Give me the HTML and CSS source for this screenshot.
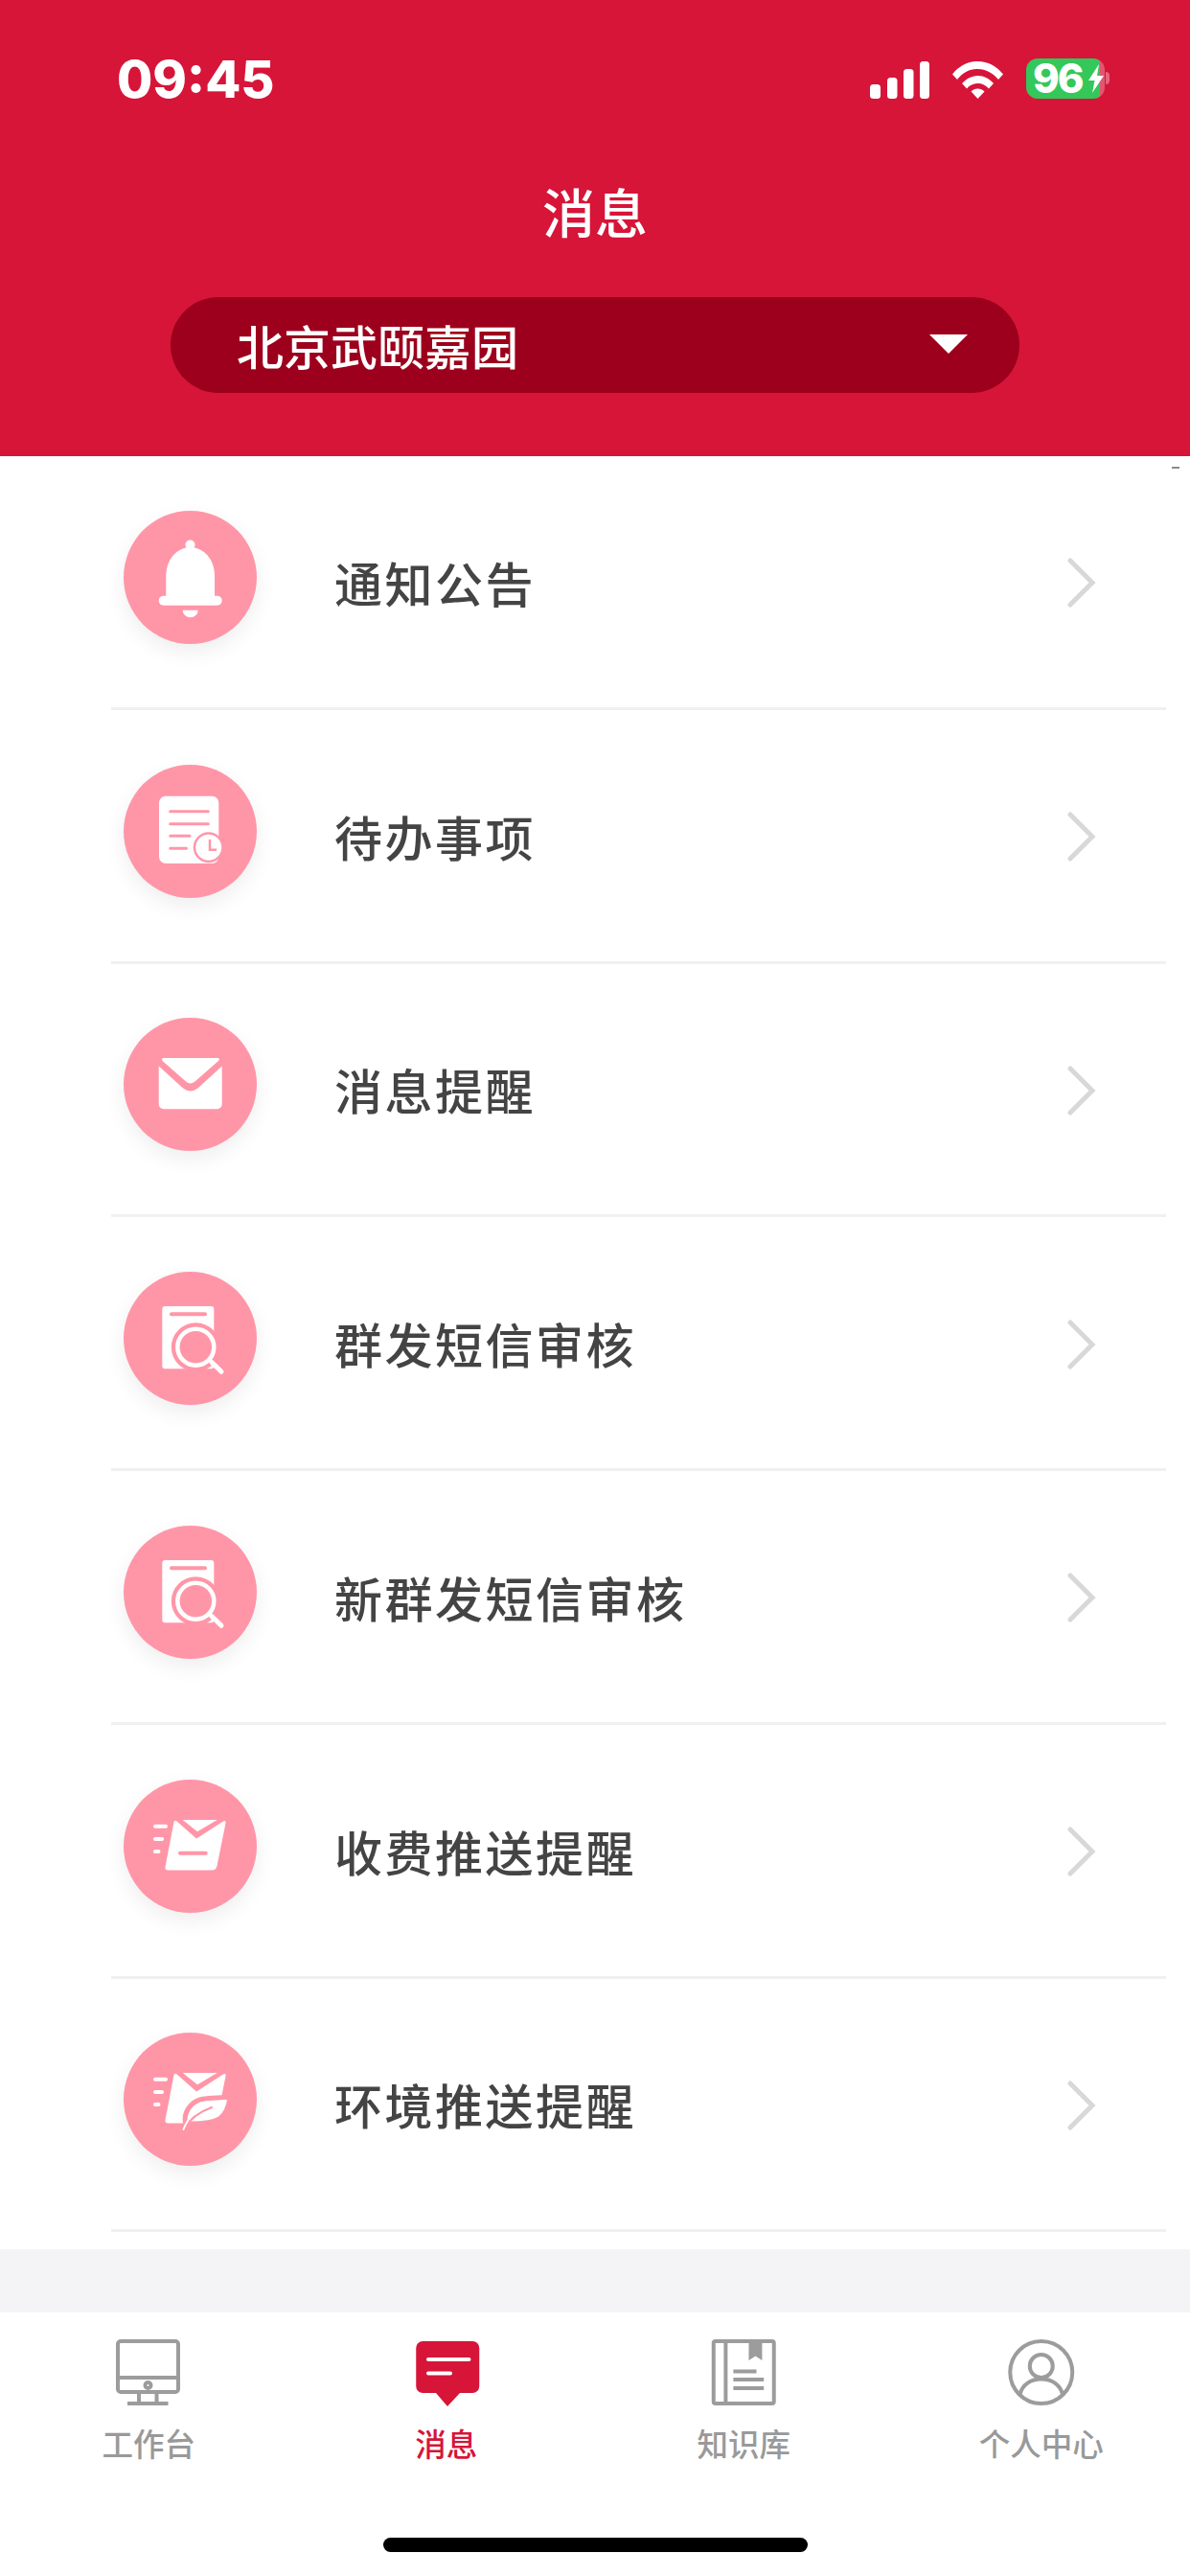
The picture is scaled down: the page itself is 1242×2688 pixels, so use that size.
FILE: index.html
```html
<!DOCTYPE html>
<html lang="zh-CN">
<head>
<meta charset="utf-8">
<title>消息</title>
<link rel="stylesheet" href="styles.css">
</head>
<body>
<header class="header">
  <div class="status">
    <span class="time">09:45</span>
    <div class="status-icons">
      <svg class="signal" viewBox="0 0 62 39"><rect x="0" y="24" width="11" height="15" rx="3.5"/><rect x="18" y="17" width="10.500" height="22" rx="3.500"/><rect x="35" y="8" width="10.500" height="31" rx="3.500"/><rect x="52" y="0" width="10" height="39" rx="3.500"/></svg>
      <svg class="wifi" viewBox="0 0 53 39"><path d="M0 13.500C7 5 16 0 26.500 0S46 5 53 13.500L48 19C42 12 35 8 26.500 8S11 12 5 19Z"/><path d="M10 23C14.500 18 20 15 26.500 15S38.500 18 43 23L38 28.500C35 25 31 23 26.500 23S18 25 15 28.500Z"/><path d="M19.500 31.500C21.500 29.500 24 28.500 26.500 28.500S31.500 29.500 33.500 31.500L26.500 39Z"/></svg>
      <div class="battery"><span class="battery-num">96</span><svg class="bolt" viewBox="0 0 16 30"><path d="M11 0 0 17H6.500L4 30 16 12H9Z"/></svg></div>
    </div>
  </div>
  <h1 class="title">消息</h1>
  <div class="picker">
    <span class="picker-text">北京武颐嘉园</span>
    <span class="picker-caret"></span>
  </div>
</header>

<main class="list">
  <span class="speck"></span>
  <div class="row">
    <div class="badge"><svg class="glyph" viewBox="0 0 139 139">
      <circle class="w" cx="69.500" cy="35.500" r="5"/>
      <path class="w" d="M44.300 90V67A25.300 29 0 0 1 95 67V90Z"/>
      <rect class="w" x="36.700" y="88.700" width="66" height="10" rx="5"/>
      <path class="w" d="M61.700 103.700H77.700A8 7.600 0 0 1 61.700 103.700Z"/>
    </svg></div>
    <span class="label">通知公告</span>
    <svg class="chev" viewBox="0 0 30 52"><path d="M3 3 26 26 3 49"/></svg>
  </div>
  <div class="row">
    <div class="badge"><svg class="glyph" viewBox="0 0 139 139">
      <rect class="w" x="37" y="32.700" width="62.300" height="70.300" rx="7"/>
      <path class="p-line" d="M48.700 48.700H88.300M48.700 61.700H88.300M48.700 74.300H69M48.700 87.300H65.500"/>
      <circle class="p" cx="88.700" cy="86.300" r="16"/>
      <circle class="w" cx="88.700" cy="86.300" r="13.500"/>
      <path class="p-hand" d="M90 78V88.700H97"/>
    </svg></div>
    <span class="label">待办事项</span>
    <svg class="chev" viewBox="0 0 30 52"><path d="M3 3 26 26 3 49"/></svg>
  </div>
  <div class="row">
    <div class="badge"><svg class="glyph" viewBox="0 0 139 139">
      <path class="w" d="M42 42H98Q101 42 99 45L74.500 66.500Q69.500 70.500 65 66.500L40.500 45Q39 42 42 42Z"/>
      <path class="w" d="M36.700 50.500 62 73.500Q69.700 79.500 77.500 73.500L102.700 50.500V90.300A5 5 0 0 1 97.700 95.300H41.700A5 5 0 0 1 36.700 90.300Z"/>
    </svg></div>
    <span class="label">消息提醒</span>
    <svg class="chev" viewBox="0 0 30 52"><path d="M3 3 26 26 3 49"/></svg>
  </div>
  <div class="row">
    <div class="badge"><svg class="glyph" viewBox="0 0 139 139">
      <rect class="w" x="40.300" y="36" width="54" height="65.300" rx="3"/>
      <path class="p-bar" d="M50 44.300H85"/>
      <circle class="p" cx="75.300" cy="78.700" r="25.500"/>
      <circle class="ring" cx="75.300" cy="78.700" r="19"/>
      <path class="handle" d="M91.700 94.300 102 104.300"/>
    </svg></div>
    <span class="label">群发短信审核</span>
    <svg class="chev" viewBox="0 0 30 52"><path d="M3 3 26 26 3 49"/></svg>
  </div>
  <div class="row">
    <div class="badge"><svg class="glyph" viewBox="0 0 139 139">
      <rect class="w" x="40.300" y="36" width="54" height="65.300" rx="3"/>
      <path class="p-bar" d="M50 44.300H85"/>
      <circle class="p" cx="75.300" cy="78.700" r="25.500"/>
      <circle class="ring" cx="75.300" cy="78.700" r="19"/>
      <path class="handle" d="M91.700 94.300 102 104.300"/>
    </svg></div>
    <span class="label">新群发短信审核</span>
    <svg class="chev" viewBox="0 0 30 52"><path d="M3 3 26 26 3 49"/></svg>
  </div>
  <div class="row">
    <div class="badge"><svg class="glyph" viewBox="0 0 139 139">
      <path class="speed" d="M33 48.700H44M33 62H40M33 75H36.500"/>
      <path class="w" d="M55 43 76 61.500 104 43.500Q107 42 106.500 45.500L97.500 90Q96.500 94.500 92 94.500H46.500Q43 94.500 43.500 91L52.500 44Q53 42 55 43Z"/>
      <path class="w" d="M61.700 42H97.700L77 54.300Z"/>
      <path class="p-bar" d="M59 76.700H85.700"/>
    </svg></div>
    <span class="label">收费推送提醒</span>
    <svg class="chev" viewBox="0 0 30 52"><path d="M3 3 26 26 3 49"/></svg>
  </div>
  <div class="row">
    <div class="badge"><svg class="glyph" viewBox="0 0 139 139">
      <path class="speed" d="M33 48.700H44M33 62H40M33 75H36.500"/>
      <path class="w" d="M55 43 76 61.500 104 43.500Q107 42 106.500 45.500L97.500 90Q96.500 94.500 92 94.500H46.500Q43 94.500 43.500 91L52.500 44Q53 42 55 43Z"/>
      <path class="w" d="M61.700 42H97.700L77 54.300Z"/>
      <path class="leaf" d="M111 67C95 69 80 66 71 75 64 82 63 90 65 95 75 95 90 96 100 90 107 85 110 76 111 67Z"/>
      <path class="vein" d="M62.500 101C69 90 78 83 92 78"/>
      <path class="stem" d="M62.500 101C64 97 65 95 67 92"/>
    </svg></div>
    <span class="label">环境推送提醒</span>
    <svg class="chev" viewBox="0 0 30 52"><path d="M3 3 26 26 3 49"/></svg>
  </div>
</main>

<div class="band"></div>

<footer class="tabbar">
  <nav class="tabs">
    <div class="tab">
      <svg class="tab-icon" viewBox="0 0 70 70"><rect x="3" y="2" width="63" height="53" rx="3"/><path d="M3 40H66M25 56V65M43.500 56V65M13 67H55.500"/><circle cx="34.500" cy="48" r="3"/></svg>
      <span class="tab-label">工作台</span>
    </div>
    <div class="tab tab-active">
      <svg class="tab-icon" viewBox="0 0 70 70"><path class="msg" d="M10.250 2H62.250A7 7 0 0 1 69.250 9V49A7 7 0 0 1 62.250 56H49L36 70 24 56H10.250A7 7 0 0 1 3.250 49V9A7 7 0 0 1 10.250 2Z"/><path class="msg-line" d="M16 21H58.500M16 35.600H39"/></svg>
      <span class="tab-label">消息</span>
    </div>
    <div class="tab">
      <svg class="tab-icon" viewBox="0 0 70 70"><rect x="3.750" y="2" width="63" height="65" rx="2"/><path d="M16.400 2V67M24.400 33.600H48.500M24.400 42H56.200M24.400 51H56.200"/><path class="book-mark" d="M40.500 2H54.400V22L47.500 17.500 40.500 22Z"/></svg>
      <span class="tab-label">知识库</span>
    </div>
    <div class="tab">
      <svg class="tab-icon" viewBox="0 0 70 70"><circle cx="34.750" cy="34.500" r="32.500"/><circle cx="34.750" cy="28" r="12"/><path d="M12.500 57.500C15 47 24 41.500 34.750 41.500S54.500 47 57 57.500"/></svg>
      <span class="tab-label">个人中心</span>
    </div>
  </nav>
  <div class="home-bar"></div>
</footer>
</body>
</html>
```
FILE: styles.css
```css
* { box-sizing: border-box; margin: 0; padding: 0; }

html, body { width: 1242px; height: 2688px; overflow: hidden; }

body {
  display: flex;
  flex-direction: column;
  background: #fff;
  font-family: "Noto Sans CJK SC", "Noto Sans", sans-serif;
}

/* Header */
.header {
  height: 476px;
  flex: none;
  background: #d61539;
  color: #fff;
}

.status {
  height: 184px;
  padding: 61px 89px 0 122px;
  display: flex;
  justify-content: space-between;
  align-items: flex-start;
}

.time {
  font-family: Inter, "Liberation Sans", sans-serif;
  font-weight: 800;
  font-size: 54px;
  line-height: 44px;
  letter-spacing: 0;
}

.status-icons { display: flex; align-items: center; gap: 24px; height: 42px; }

.signal { width: 62px; height: 39px; fill: #fff; margin-top: 3px; }
.wifi { width: 53px; height: 39px; fill: #fff; margin-top: 3px; }

.battery {
  position: relative;
  width: 82px;
  height: 42px;
  border-radius: 12px;
  background: linear-gradient(90deg, #34c759 77px, rgba(255, 255, 255, .28) 77px);
  display: flex;
  align-items: center;
  padding-left: 7px;
}

.battery::after {
  content: "";
  position: absolute;
  left: 83px;
  top: 14px;
  width: 4px;
  height: 13px;
  border-radius: 0 6px 6px 0;
  background: rgba(255, 255, 255, .35);
}

.battery-num {
  font-family: Inter, "Liberation Sans", sans-serif;
  font-weight: 800;
  font-size: 42px;
  line-height: 42px;
  letter-spacing: -2px;
}

.bolt { width: 16px; height: 30px; fill: #fff; margin-left: 6px; }

.title {
  font-size: 55px;
  font-weight: 500;
  line-height: 70px;
  text-align: center;
}

.picker {
  width: 886px;
  height: 100px;
  margin: 56px 0 0 178px;
  padding: 0 54px 0 69px;
  border-radius: 50px;
  background: #9c001c;
  display: flex;
  align-items: center;
  justify-content: space-between;
}

.picker-text { font-size: 49px; font-weight: 500; line-height: 60px; letter-spacing: 0; }

.picker-caret {
  width: 0;
  height: 0;
  border-left: 20px solid transparent;
  border-right: 20px solid transparent;
  border-top: 20px solid #fff;
  margin-top: -2px;
}

/* List */
.list {
  position: relative;
  flex: none;
  padding-bottom: 18px;
}

.speck {
  position: absolute;
  top: 11px;
  right: 11px;
  width: 8px;
  height: 2px;
  background: #8a8a8a;
}

.row {
  height: 264.75px;
  margin: 0 25px 0 116px;
  padding-left: 13px;
  border-bottom: 3px solid #f0f0f0;
  display: flex;
  align-items: center;
}

.badge {
  width: 139px;
  height: 139px;
  flex: none;
  margin-bottom: 9px;
  border-radius: 50%;
  background: #ff96a8;
  box-shadow: 0 8px 22px rgba(0, 0, 0, .07);
}

.glyph { display: block; width: 139px; height: 139px; }
.glyph .w { fill: #fff; }
.glyph .p { fill: #ff96a8; }
.glyph .p-line { fill: none; stroke: #ff96a8; stroke-width: 3; stroke-linecap: round; }
.glyph .p-hand { fill: none; stroke: #ff96a8; stroke-width: 2.500; }
.glyph .p-bar { fill: none; stroke: #ff96a8; stroke-width: 4; stroke-linecap: round; }
.glyph .ring { fill: none; stroke: #fff; stroke-width: 4.500; }
.glyph .handle { fill: none; stroke: #fff; stroke-width: 5; stroke-linecap: round; }
.glyph .speed { fill: none; stroke: #fff; stroke-width: 4; stroke-linecap: round; }
.glyph .leaf { fill: #fff; stroke: #ff96a8; stroke-width: 5; stroke-linejoin: round; }
.glyph .vein { fill: none; stroke: #ff96a8; stroke-width: 2; stroke-linecap: round; }
.glyph .stem { fill: none; stroke: #fff; stroke-width: 2; stroke-linecap: round; }

.label {
  margin-left: 81px;
  font-size: 50px;
  font-weight: 500;
  line-height: 60px;
  letter-spacing: 2.5px;
  color: #444;
}

.chev {
  width: 30px;
  height: 52px;
  margin-left: auto;
  margin-top: 3px;
  margin-right: 73px;
  fill: none;
  stroke: #d8d8d8;
  stroke-width: 5;
  stroke-linecap: round;
}

.band {
  flex: 1;
  background: #f4f4f6;
}

/* Tab bar */
.tabbar {
  flex: none;
  height: 275px;
  padding-top: 28px;
  background: #fff;
}

.tabs { display: grid; grid-template-columns: repeat(4, 1fr); }

.tab {
  display: flex;
  flex-direction: column;
  align-items: center;
  gap: 18px;
  color: #999;
}

.tab-icon {
  width: 70px;
  height: 70px;
  fill: none;
  stroke: #9c9c9c;
  stroke-width: 4;
  overflow: visible;
}

.tab-icon .book-mark { fill: #9c9c9c; stroke: none; }

.tab-icon .msg { fill: #d61539; stroke: none; }
.tab-icon .msg-line { stroke: #fff; stroke-linecap: round; }

.tab-label { font-size: 32.5px; font-weight: 500; line-height: 40px; }

.tab-active { color: #d61539; }

.home-bar {
  width: 443px;
  height: 15px;
  margin: 79px auto 0;
  border-radius: 8px;
  background: #000;
}
```
